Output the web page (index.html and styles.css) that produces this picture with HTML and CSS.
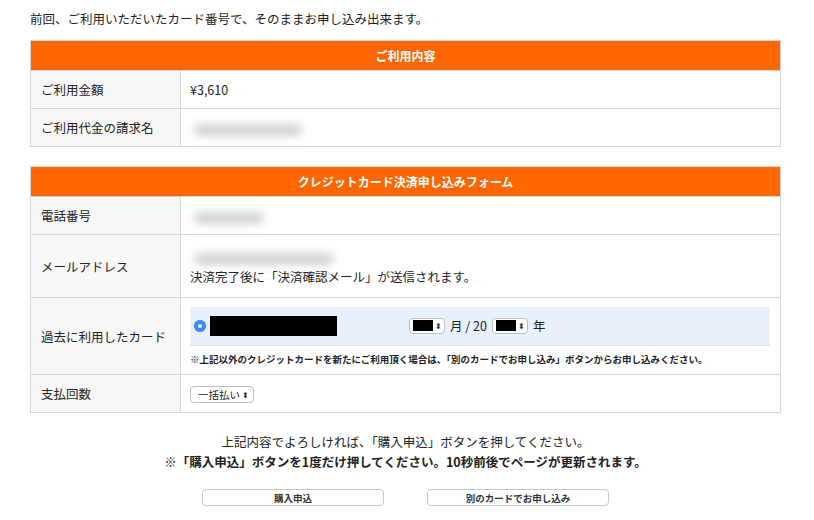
FILE: index.html
```html
<!DOCTYPE html>
<html lang="ja">
<head>
    <meta charset="UTF-8">
    <title>クレジットカード決済</title>
    <link rel="stylesheet" href="styles.css">
</head>
<body>
    <div class="page">
        <p class="intro">前回、ご利用いただいたカード番号で、そのままお申し込み出来ます。</p>

        <table class="form-table">
            <tr><th colspan="2" class="head">ご利用内容</th></tr>
            <tr class="row">
                <td class="label">ご利用金額</td>
                <td class="value">¥3,610</td>
            </tr>
            <tr class="row">
                <td class="label">ご利用代金の請求名</td>
                <td class="value"><span class="blur blur-name"></span></td>
            </tr>
        </table>

        <table class="form-table">
            <tr><th colspan="2" class="head">クレジットカード決済申し込みフォーム</th></tr>
            <tr class="row">
                <td class="label">電話番号</td>
                <td class="value"><span class="blur blur-tel"></span></td>
            </tr>
            <tr class="row-mail">
                <td class="label">メールアドレス</td>
                <td class="value">
                    <span class="blur blur-mail"></span>
                    <div class="mail-note">決済完了後に「決済確認メール」が送信されます。</div>
                </td>
            </tr>
            <tr class="row-card">
                <td class="label">過去に利用したカード</td>
                <td class="value">
                    <div class="card-box">
                        <span class="radio"></span>
                        <span class="masked"></span>
                        <span class="expiry">
                            <span class="fake-select"><span class="fill"></span><span class="arrows">⬍</span></span>
                            月 / 20
                            <span class="fake-select"><span class="fill"></span><span class="arrows">⬍</span></span>
                            年
                        </span>
                    </div>
                    <p class="card-note">※上記以外のクレジットカードを新たにご利用頂く場合は、「別のカードでお申し込み」ボタンからお申し込みください。</p>
                </td>
            </tr>
            <tr class="row">
                <td class="label">支払回数</td>
                <td class="value">
                    <span class="fake-select pay">一括払い <span class="arrows">⬍</span></span>
                </td>
            </tr>
        </table>

        <div class="confirm">
            <p>上記内容でよろしければ、「購入申込」ボタンを押してください。</p>
            <p class="warn">※「購入申込」ボタンを1度だけ押してください。10秒前後でページが更新されます。</p>
        </div>

        <div class="buttons">
            <button class="btn">購入申込</button>
            <button class="btn">別のカードでお申し込み</button>
        </div>
    </div>
</body>
</html>
```

FILE: styles.css
```css
body {
    margin: 0;
    font-family: "Noto Sans CJK JP", "Liberation Sans", sans-serif;
    font-size: 12.5px;
    color: #222;
    background: #fff;
}

.page {
    width: 751px;
    padding: 9px 0 0 30px;
}

.intro {
    margin: 0 0 11px;
    line-height: 20px;
}

.form-table {
    width: 751px;
    border-collapse: collapse;
    margin-bottom: 19px;
}

.form-table td,
.form-table th {
    border: 1px solid #d6d6d6;
}

.head {
    height: 29px;
    padding: 0;
    background-color: #ff6600;
    color: #fff;
    font-size: 12px;
    font-weight: bold;
    text-align: center;
}

.label {
    width: 139px;
    padding: 0 0 0 10px;
    background-color: #f7f7f7;
}

.value {
    padding: 0 10px 0 9px;
    vertical-align: middle;
}

.row td {
    height: 37px;
}

.row-mail td {
    height: 62px;
}

.row-card td {
    height: 76px;
}

.blur {
    display: inline-block;
    height: 12px;
    background-color: #d2d2d2;
    border-radius: 6px;
    filter: blur(4px);
    vertical-align: middle;
}

.blur-name {
    width: 108px;
    margin-left: 4px;
}

.blur-tel {
    width: 70px;
    margin-left: 4px;
}

.blur-mail {
    width: 140px;
    margin: 3px 0 0 4px;
}

.mail-note {
    margin-top: 3px;
    line-height: 18px;
}

.card-box {
    display: flex;
    align-items: center;
    height: 38px;
    padding-left: 4px;
    background-color: #e8f0fb;
    border-bottom: 1px solid #d6dde8;
}

.radio {
    width: 12px;
    height: 12px;
    border-radius: 50%;
    background: #2e86f0;
    box-shadow: inset 0 0 0 3.5px #3b8ff2;
    position: relative;
}

.radio::after {
    content: "";
    position: absolute;
    left: 4px;
    top: 4px;
    width: 4px;
    height: 4px;
    border-radius: 50%;
    background: #fff;
}

.masked {
    width: 127px;
    height: 20px;
    margin-left: 4px;
    background: #000;
}

.expiry {
    display: flex;
    align-items: center;
    gap: 5px;
    margin-left: 72px;
}

.fake-select {
    display: inline-flex;
    align-items: center;
    height: 14px;
    padding: 0 2px 0 3px;
    border: 1px solid #bdbdbd;
    border-radius: 4px;
    background: #fff;
    font-size: 11px;
}

.fill {
    width: 20px;
    height: 11px;
    background: #000;
}

.arrows {
    font-size: 8px;
    margin-left: 2px;
    color: #333;
}

.card-note {
    margin: 6px 0 0;
    font-size: 9.5px;
    font-weight: bold;
    line-height: 14px;
}

.pay {
    height: 15px;
    padding: 0 4px 0 7px;
    font-size: 10.5px;
}

.confirm {
    margin-top: 0;
    text-align: center;
}

.confirm p {
    margin: 0;
    line-height: 20px;
}

.warn {
    font-weight: bold;
}

.buttons {
    display: flex;
    justify-content: center;
    gap: 43px;
    margin-top: 17px;
}

.btn {
    width: 182px;
    height: 17px;
    padding: 0;
    border: 1px solid #c6c6c6;
    border-radius: 4px;
    background: #fff;
    font-family: inherit;
    font-size: 9.5px;
    font-weight: bold;
    color: #333;
}
```
